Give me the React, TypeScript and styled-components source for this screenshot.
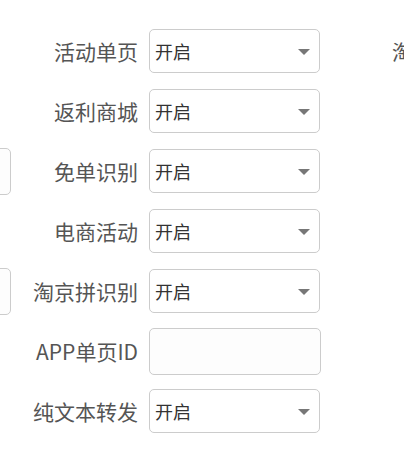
import React from 'react';
import styled, { createGlobalStyle } from 'styled-components';

type Field = {
    label: string;
    kind: 'select' | 'input' | 'empty';
    value?: string;
};

const GlobalStyle = createGlobalStyle`
    html, body {
        margin: 0;
        padding: 0;
        background: #ffffff;
    }
    body {
        font-family: "Noto Sans CJK SC", "Noto Sans", "Liberation Sans", sans-serif;
    }
`;

const Page = styled.div`
    width: 404px;
    height: 466px;
    overflow: hidden;
    background: #ffffff;
`;

const Columns = styled.div`
    display: flex;
    gap: 7px;
    padding-top: 29px;
    margin-left: -292px;
`;

const Column = styled.div`
    display: flex;
    flex-direction: column;
    gap: 16px;
    flex-shrink: 0;
`;

const Row = styled.div`
    display: flex;
    align-items: center;
    gap: 11px;
    height: 44px;
`;

const Label = styled.label<{ $align?: 'right' | 'left'; $indent?: number }>`
    width: 120px;
    flex-shrink: 0;
    text-align: ${props => props.$align === 'left' ? 'left' : 'right'};
    padding-left: ${props => props.$indent ?? 0}px;
    box-sizing: border-box;
    font-size: 21px;
    color: #555555;
    white-space: nowrap;
    line-height: 1;
`;

const SelectBox = styled.div`
    width: 171px;
    height: 44px;
    box-sizing: border-box;
    border: 1px solid #cccccc;
    border-radius: 5px;
    background: #ffffff;
    display: flex;
    align-items: center;
    justify-content: space-between;
    padding: 0 9px 0 5px;
    font-size: 18px;
    color: #333333;
`;

const Caret = styled.span`
    width: 0;
    height: 0;
    border-left: 6.5px solid transparent;
    border-right: 6.5px solid transparent;
    border-top: 6px solid #777777;
    margin-top: 2px;
`;

const TextInput = styled.input`
    width: 172px;
    height: 47px;
    box-sizing: border-box;
    border: 1px solid #cccccc;
    border-radius: 5px;
    background: #fdfdfd;
    padding: 0 5px;
    font-size: 18px;
    font-family: inherit;
    color: #333333;
    outline: none;
`;

const Empty = styled.div`
    width: 171px;
    height: 44px;
`;

// left column is mostly scrolled out of view; only the edges of two boxes show
const leftFields: Field[] = [
    { label: '', kind: 'empty' },
    { label: '', kind: 'empty' },
    { label: '', kind: 'input' },
    { label: '', kind: 'empty' },
    { label: '', kind: 'input' },
    { label: '', kind: 'empty' },
    { label: '', kind: 'empty' },
];

const midFields: Field[] = [
    { label: '活动单页', kind: 'select', value: '开启' },
    { label: '返利商城', kind: 'select', value: '开启' },
    { label: '免单识别', kind: 'select', value: '开启' },
    { label: '电商活动', kind: 'select', value: '开启' },
    { label: '淘京拼识别', kind: 'select', value: '开启' },
    { label: 'APP单页ID', kind: 'input' },
    { label: '纯文本转发', kind: 'select', value: '开启' },
];

const Control: React.FC<{ field: Field }> = ({ field }) => {
    if (field.kind === 'empty') return <Empty />;
    if (field.kind === 'input') return <TextInput defaultValue="" />;
    return (
        <SelectBox>
            <span>{field.value}</span>
            <Caret />
        </SelectBox>
    );
};

export default function App() {
    return (
        <Page>
            <GlobalStyle />
            <Columns>
                <Column>
                    {leftFields.map((f, i) => (
                        <Row key={i}>
                            <Label />
                            <Control field={f} />
                        </Row>
                    ))}
                </Column>
                <Column>
                    {midFields.map((f, i) => (
                        <Row key={i}>
                            <Label>{f.label}</Label>
                            <Control field={f} />
                        </Row>
                    ))}
                </Column>
                <Column>
                    <Row>
                        <Label $align="left" $indent={64}>淘</Label>
                    </Row>
                </Column>
            </Columns>
        </Page>
    );
}
